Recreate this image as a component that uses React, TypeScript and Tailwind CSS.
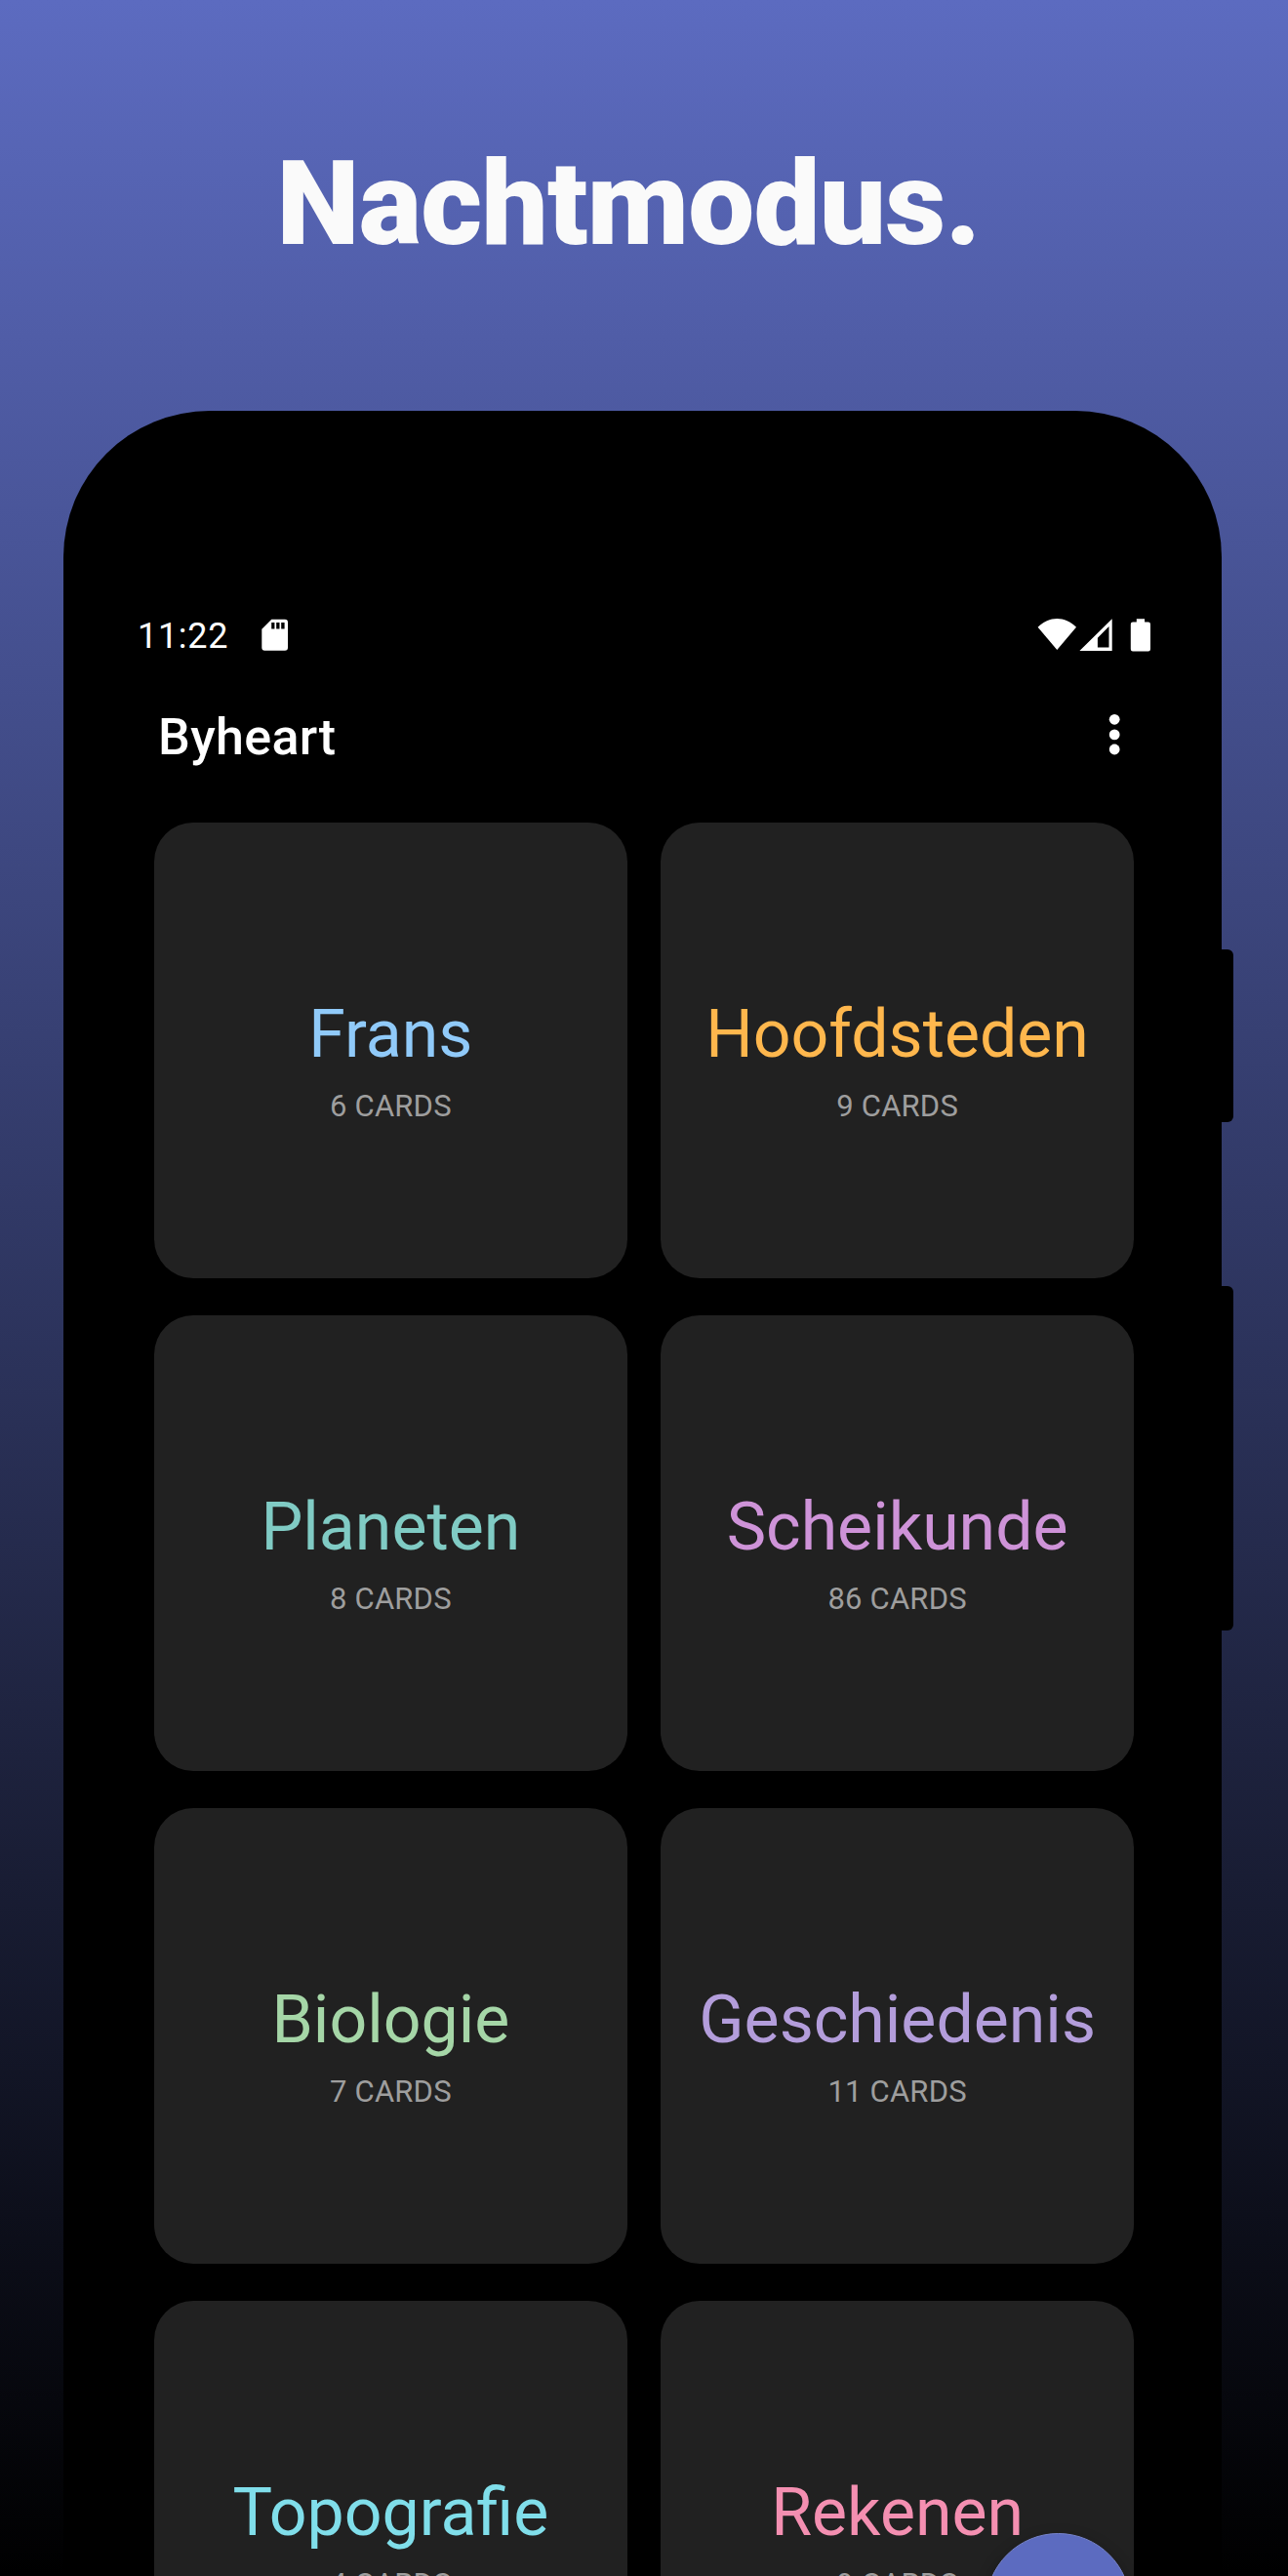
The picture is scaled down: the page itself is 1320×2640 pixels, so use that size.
type Deck = { name: string; cards: number; color: string };

const decks: Deck[] = [
  { name: "Frans", cards: 6, color: "text-[#90caf9]" },
  { name: "Hoofdsteden", cards: 9, color: "text-[#ffb74d]" },
  { name: "Planeten", cards: 8, color: "text-[#80cbc4]" },
  { name: "Scheikunde", cards: 86, color: "text-[#ce93d8]" },
  { name: "Biologie", cards: 7, color: "text-[#a5d6a7]" },
  { name: "Geschiedenis", cards: 11, color: "text-[#b39ddb]" },
  { name: "Topografie", cards: 4, color: "text-[#80deea]" },
  { name: "Rekenen", cards: 9, color: "text-[#f48fb1]" },
];

function SdCardIcon() {
  return (
    <svg className="ml-[34px] h-[34px] w-[27px]" viewBox="0 0 27 34" fill="white">
      <path
        fillRule="evenodd"
        d="M10.300 0.700H24a3 3 0 0 1 3 3V29.700a3 3 0 0 1-3 3H3.300a3 3 0 0 1-3-3V10.700ZM10.200 3.900V10.500H13.400V3.900ZM15.200 3.900V10.500H18.500V3.900ZM20.200 3.900V10.500H23.600V3.900Z"
      />
    </svg>
  );
}

function WifiIcon() {
  return (
    <svg className="h-[33px] w-[40px]" viewBox="0 0 40 33" fill="white">
      <path d="M0.600 8.700C6.300 2.900 13.300 0 20.300 0S34.300 2.900 40 8.700L20.300 32.100Z" />
    </svg>
  );
}

function SignalIcon() {
  return (
    <svg className="ml-[3px] h-[33px] w-[34px]" viewBox="0 0 34 33" fill="white">
      <path fillRule="evenodd" d="M33.700 0.200V33H0.400ZM30.500 8L18.900 19.800V29.600H30.500Z" />
    </svg>
  );
}

function BatteryIcon() {
  return (
    <svg className="ml-[18px] h-[34px] w-[21px]" viewBox="0 0 21 34" fill="white">
      <path d="M6.800 0.200H15.100V3.600H18.800A2.200 2.200 0 0 1 21 5.800V31.300A2.200 2.200 0 0 1 18.800 33.500H3A2.200 2.200 0 0 1 0.800 31.300V5.800A2.200 2.200 0 0 1 3 3.600H6.800Z" />
    </svg>
  );
}

function MoreIcon() {
  return (
    <svg className="mt-[6px] h-[44px] w-[12px]" viewBox="0 0 12 44" fill="white">
      <circle cx="6.200" cy="6.300" r="5.400" />
      <circle cx="6.200" cy="21.900" r="5.400" />
      <circle cx="6.200" cy="37" r="5.400" />
    </svg>
  );
}

function StatusBar() {
  return (
    <div className="flex h-[34px] items-start justify-between pr-[73px] pl-[76px]">
      <div className="flex items-start">
        <span className="w-[93px] text-[36px] leading-[37px] tracking-[0.7px]">11:22</span>
        <SdCardIcon />
      </div>
      <div className="flex items-start">
        <WifiIcon />
        <SignalIcon />
        <BatteryIcon />
      </div>
    </div>
  );
}

function AppBar() {
  return (
    <div className="mt-[57px] flex h-[60px] items-start justify-between pr-[104px] pl-[97px]">
      <h2 className="text-[52px] leading-[61px] font-medium tracking-[0.35px]">Byheart</h2>
      <MoreIcon />
    </div>
  );
}

function DeckCard({ deck }: { deck: Deck }) {
  return (
    <div className="flex h-[467px] flex-col items-center rounded-[40px] bg-[#212121] pt-[177px]">
      <div className={`text-[68px] leading-[80px] whitespace-nowrap ${deck.color}`}>{deck.name}</div>
      <div className="mt-[16px] text-[31px] leading-[36px] tracking-[0.2px] text-[#9e9e9e]">{deck.cards} CARDS</div>
    </div>
  );
}

export default function App() {
  return (
    <div className="relative h-[2640px] w-[1320px] overflow-hidden bg-linear-to-b/srgb from-[#5c6bc0] to-black font-['Roboto',sans-serif] text-white">
      <header className="flex h-[421px] justify-center pt-[139px] pr-[32px]">
        <h1 className="h-[140px] text-[121px] leading-[140px] font-black tracking-[-0.75px] text-[#fafafa]">Nachtmodus.</h1>
      </header>

      <main className="relative ml-[65px] h-[2400px] w-[1187px] rounded-t-[150px] bg-black pt-[213px]">
        <StatusBar />
        <AppBar />
        <div className="mt-[58px] mr-[90px] ml-[93px] grid grid-cols-2 gap-x-[34.500px] gap-y-[38px]">
          {decks.map((deck) => (
            <DeckCard key={deck.name} deck={deck} />
          ))}
        </div>
        <div className="absolute top-[552px] left-full h-[177px] w-[12px] rounded-r-[6px] bg-black" />
        <div className="absolute top-[897px] left-full h-[353px] w-[12px] rounded-r-[6px] bg-black" />
        <div className="absolute top-[2175px] left-[945px] size-[149px] rounded-full border border-[#7683cb] bg-[#5c6bc0] shadow-[0_6px_16px_rgba(0,0,0,0.3)]" />
      </main>
    </div>
  );
}
